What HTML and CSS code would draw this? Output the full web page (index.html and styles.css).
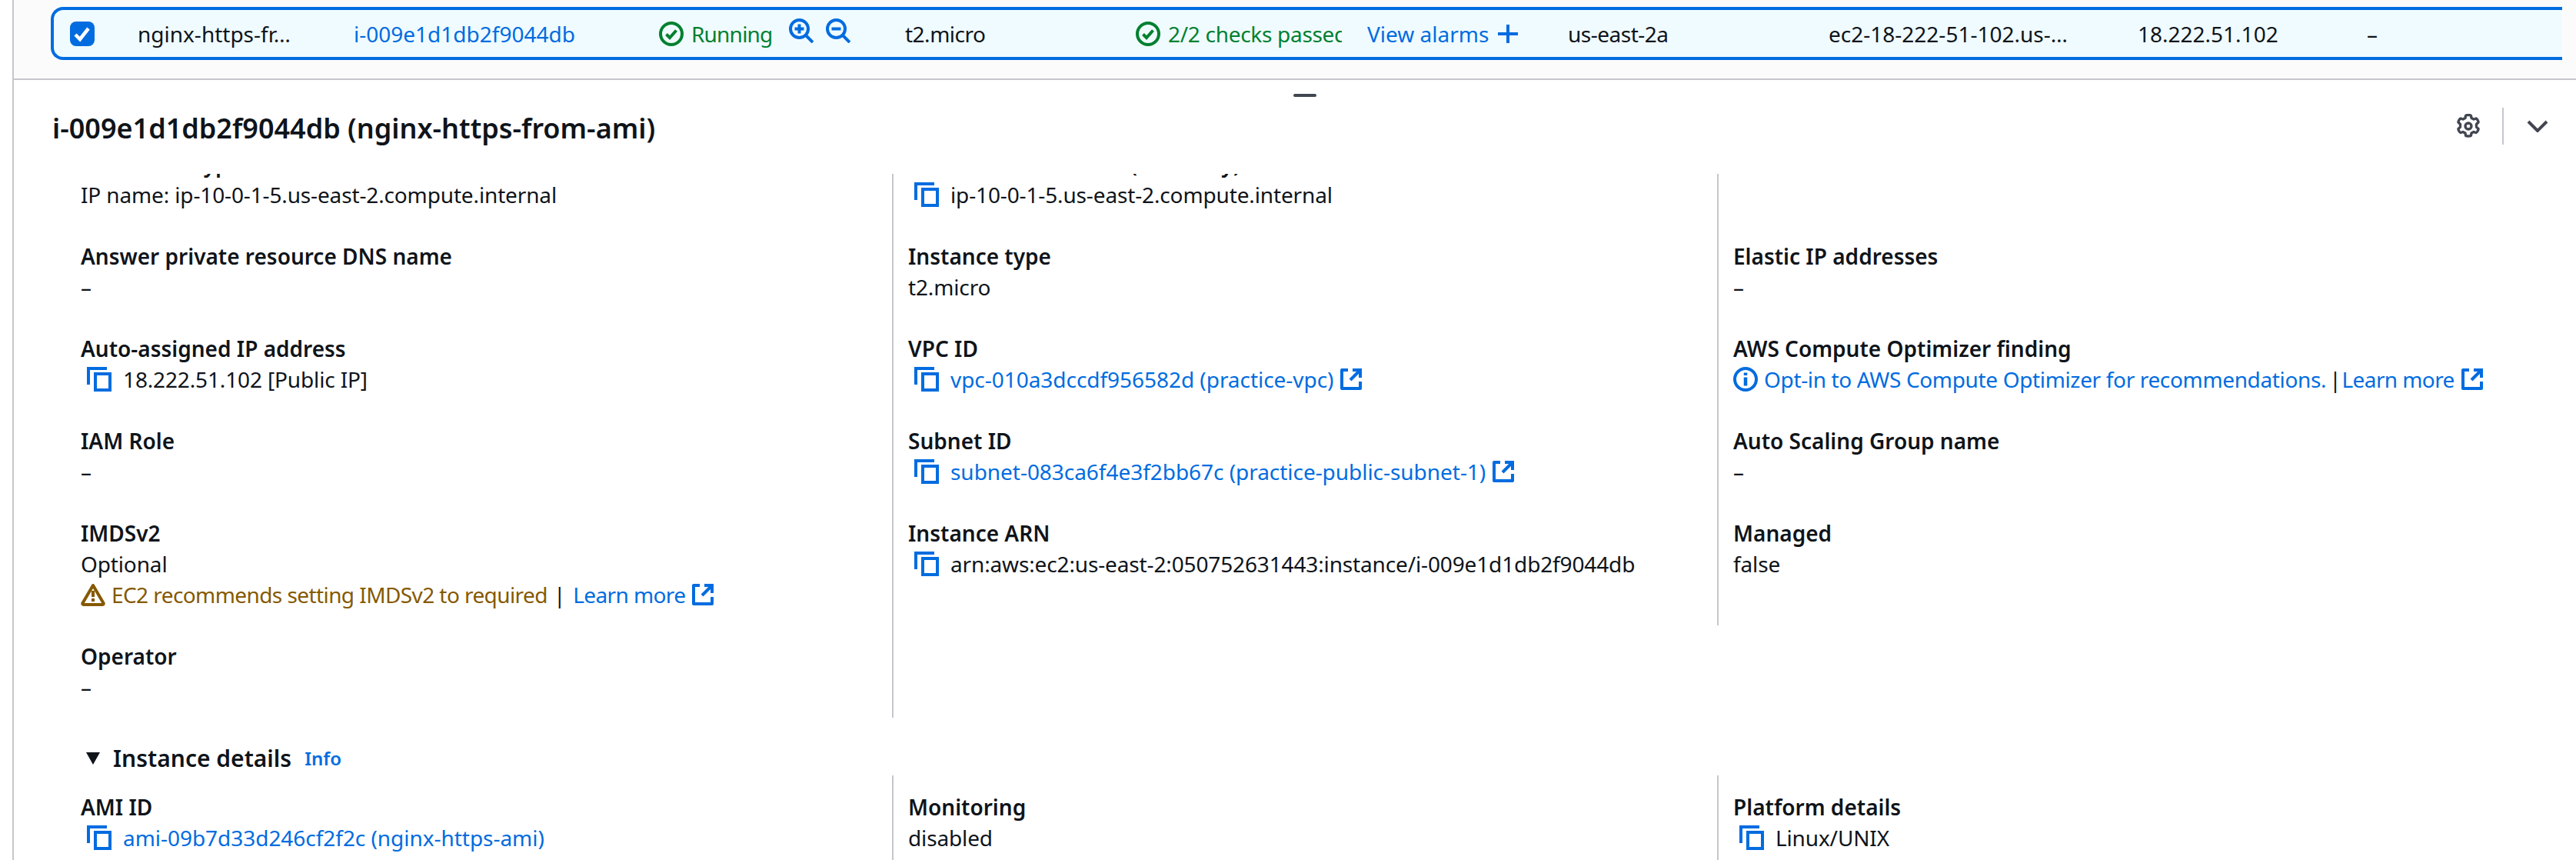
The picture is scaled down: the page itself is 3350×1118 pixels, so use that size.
FILE: index.html
```html
<!DOCTYPE html>
<html lang="en">
<head>
  <meta charset="UTF-8">
  <title>EC2 Instance details</title>
  <link rel="stylesheet" href="styles.css">
</head>
<body>
  <svg class="defs" aria-hidden="true">
    <symbol id="copy" viewBox="0 0 32 32">
      <path d="M2 23V2h24" fill="none" stroke="currentColor" stroke-width="4"/>
      <rect x="11" y="9" width="19" height="21" fill="none" stroke="currentColor" stroke-width="4"/>
    </symbol>
    <symbol id="ext" viewBox="0 0 28 28">
      <path d="M10 2H2v24h24v-9" fill="none" stroke="currentColor" stroke-width="4" stroke-linejoin="round"/>
      <path d="M16 2h10v10" fill="none" stroke="currentColor" stroke-width="4"/>
      <path d="M25 3 13 15" fill="none" stroke="currentColor" stroke-width="4"/>
    </symbol>
    <symbol id="ok" viewBox="0 0 32 32">
      <circle cx="16" cy="16" r="14" fill="none" stroke="currentColor" stroke-width="4"/>
      <path d="M9.500 16.500 14 21l8.500-9.500" fill="none" stroke="currentColor" stroke-width="4"/>
    </symbol>
  </svg>

  <div class="pane">
    <div class="table-area">
      <div class="selected-row">
        <div class="cell"><span class="checkbox"><svg viewBox="0 0 32 32" width="32" height="32"><path d="M7 17l6 6 11-14" fill="none" stroke="#fff" stroke-width="4.500"/></svg></span></div>
        <div class="cell">nginx-https-fr…</div>
        <div class="cell link">i-009e1d1db2f9044db</div>
        <div class="cell status green">
          <svg class="icon"><use href="#ok"/></svg><span class="running">Running</span>
          <svg class="zoom-icon link" viewBox="0 0 32 32"><circle cx="13.500" cy="13.500" r="11.500" fill="none" stroke="currentColor" stroke-width="4"/><path d="M22 22l9 9" stroke="currentColor" stroke-width="4"/><path d="M7.500 13.500h12M13.500 7.500v12" stroke="currentColor" stroke-width="4"/></svg>
          <svg class="zoom-icon link" viewBox="0 0 32 32"><circle cx="13.500" cy="13.500" r="11.500" fill="none" stroke="currentColor" stroke-width="4"/><path d="M22 22l9 9" stroke="currentColor" stroke-width="4"/><path d="M7.500 13.500h12" stroke="currentColor" stroke-width="4"/></svg>
        </div>
        <div class="cell tight">t2.micro</div>
        <div class="cell status green">
          <svg class="icon"><use href="#ok"/></svg><span class="clip">2/2 checks passed</span>
        </div>
        <div class="cell alarms link">View alarms <svg class="plus" viewBox="0 0 26 24"><path d="M13 0v24M0 12h26" stroke="currentColor" stroke-width="4"/></svg></div>
        <div class="cell tight">us-east-2a</div>
        <div class="cell">ec2-18-222-51-102.us-…</div>
        <div class="cell">18.222.51.102</div>
        <div class="cell">–</div>
      </div>
    </div>

    <div class="details">
      <div class="drag-handle"></div>
      <div class="details-head">
        <h2>i-009e1d1db2f9044db (nginx-https-from-ami)</h2>
        <div class="head-actions">
          <svg class="gear" viewBox="0 0 32 32"><path d="M12.500 2.500c0-1 3-1 3.500-1s3.500 0 3.500 1l.5 3 3 1.500 3-1c1-.3 3.500 4 3 5l-2.500 2.500v3.500l2.500 2.500c.5 1-2 5.300-3 5l-3-1-3 1.500-.5 3c0 1-3 1-3.500 1s-3.500 0-3.500-1l-.5-3-3-1.500-3 1c-1 .3-3.500-4-3-5l2.500-2.500v-3.500l-2.500-2.500c-.5-1 2-5.300 3-5l3 1 3-1.500z" fill="none" stroke="#424650" stroke-width="3.400" stroke-linejoin="round"/><circle cx="16" cy="16" r="4" fill="none" stroke="#424650" stroke-width="3.400"/></svg>
          <span class="head-divider"></span>
          <svg class="chevron" viewBox="0 0 28 16"><path d="M2 2l12 12L26 2" fill="none" stroke="#424650" stroke-width="4"/></svg>
        </div>
      </div>

      <div class="scroller">
        <div class="scroll-inner">
          <div class="columns">
            <div class="col">
              <div class="item"><div class="label">Hostname type</div><div class="value">IP name: ip-10-0-1-5.us-east-2.compute.internal</div></div>
              <div class="item"><div class="label">Answer private resource DNS name</div><div class="value">–</div></div>
              <div class="item"><div class="label">Auto-assigned IP address</div><div class="value copy"><svg class="copy-icon"><use href="#copy"/></svg>18.222.51.102 [Public IP]</div></div>
              <div class="item"><div class="label">IAM Role</div><div class="value">–</div></div>
              <div class="item">
                <div class="label">IMDSv2</div>
                <div class="value">Optional</div>
                <div class="value warn">
                  <svg class="warn-icon" viewBox="0 0 32 30"><path d="M16 3 2.500 26c-.5 1 0 2 1 2h25c1 0 1.500-1 1-2z" fill="none" stroke="#855900" stroke-width="4" stroke-linejoin="round"/><path d="M16 10v8M16 20v4" stroke="#855900" stroke-width="4"/></svg>
                  <span class="warn-text">EC2 recommends setting IMDSv2 to required</span><span class="sep">|</span><a class="link learn">Learn more</a><svg class="ext-icon link"><use href="#ext"/></svg>
                </div>
              </div>
              <div class="item"><div class="label">Operator</div><div class="value">–</div></div>
            </div>
            <div class="col ruled">
              <div class="item"><div class="label">Private IP DNS name (IPv4 only)</div><div class="value copy"><svg class="copy-icon"><use href="#copy"/></svg>ip-10-0-1-5.us-east-2.compute.internal</div></div>
              <div class="item"><div class="label">Instance type</div><div class="value tight">t2.micro</div></div>
              <div class="item"><div class="label">VPC ID</div><div class="value copy link"><svg class="copy-icon"><use href="#copy"/></svg>vpc-010a3dccdf956582d (practice-vpc)<svg class="ext-icon"><use href="#ext"/></svg></div></div>
              <div class="item"><div class="label">Subnet ID</div><div class="value copy link"><svg class="copy-icon"><use href="#copy"/></svg>subnet-083ca6f4e3f2bb67c (practice-public-subnet-1)<svg class="ext-icon"><use href="#ext"/></svg></div></div>
              <div class="item"><div class="label">Instance ARN</div><div class="value copy"><svg class="copy-icon link"><use href="#copy"/></svg>arn:aws:ec2:us-east-2:050752631443:instance/i-009e1d1db2f9044db</div></div>
            </div>
            <div class="col ruled short">
              <div class="item empty"></div>
              <div class="item"><div class="label">Elastic IP addresses</div><div class="value">–</div></div>
              <div class="item">
                <div class="label">AWS Compute Optimizer finding</div>
                <div class="value info">
                  <svg class="info-icon" viewBox="0 0 32 32"><circle cx="16" cy="16" r="14" fill="none" stroke="currentColor" stroke-width="4"/><path d="M16 13.500v11M16 7.500v3.500" stroke="currentColor" stroke-width="4.500"/></svg>
                  <a class="link opt-in">Opt-in to AWS Compute Optimizer for recommendations.</a><span class="sep">|</span><a class="link learn">Learn more</a><svg class="ext-icon"><use href="#ext"/></svg>
                </div>
              </div>
              <div class="item"><div class="label">Auto Scaling Group name</div><div class="value">–</div></div>
              <div class="item"><div class="label">Managed</div><div class="value">false</div></div>
            </div>
          </div>

          <div class="section-head">
            <svg class="caret" viewBox="0 0 20 16"><path d="M1 0h18L10 16z" fill="#0f141a"/></svg>
            <h3>Instance details</h3><a class="link info-link">Info</a>
          </div>

          <div class="columns lower">
            <div class="col">
              <div class="item"><div class="label">AMI ID</div><div class="value copy link"><svg class="copy-icon"><use href="#copy"/></svg>ami-09b7d33d246cf2f2c (nginx-https-ami)</div></div>
            </div>
            <div class="col ruled">
              <div class="item"><div class="label">Monitoring</div><div class="value">disabled</div></div>
            </div>
            <div class="col ruled">
              <div class="item"><div class="label">Platform details</div><div class="value copy"><svg class="copy-icon link"><use href="#copy"/></svg>Linux/UNIX</div></div>
            </div>
          </div>
        </div>
      </div>
    </div>
  </div>
</body>
</html>
```

FILE: styles.css
```css
html, body {
  margin: 0;
  height: 100%;
  overflow: hidden;
}

body {
  font-family: "Noto Sans", Arial, sans-serif;
  font-size: 28px;
  line-height: 40px;
  color: #0f141a;
  background-color: #fff;
}

.defs {
  width: 0;
  height: 0;
  display: block;
}

.link {
  color: #006ce0;
}

.green {
  color: #00802f;
}

.tight {
  letter-spacing: -0.5px;
}

.pane {
  margin-left: 16px;
  height: 1118px;
  border-left: 2px solid #c6c6cd;
  display: flex;
  flex-direction: column;
}

.table-area {
  height: 93px;
  padding: 9px 0 0 48px;
  background-color: #fbfbfb;
  border-bottom: 2px solid #c6c6cd;
}

.selected-row {
  width: 3262px;
  height: 61px;
  display: grid;
  grid-template-columns: 88px 281px 397px 320px 300px 301px 261px 339px 402px 298px 1fr;
  align-items: center;
  background-color: #f0fbff;
  border: 4px solid #006ce0;
  border-right: none;
  border-radius: 16px 0 0 16px;
}

.cell {
  padding-left: 21px;
  white-space: nowrap;
  display: flex;
  align-items: center;
}

.checkbox {
  width: 32px;
  height: 32px;
  background-color: #006ce0;
  border-radius: 8px;
  display: block;
}

.checkbox svg {
  display: block;
}

.icon {
  width: 32px;
  height: 32px;
  margin-right: 10px;
  flex: none;
}

.running {
  margin-right: 6px;
  letter-spacing: -0.8px;
}

.zoom-icon {
  width: 32px;
  height: 32px;
  margin-left: 16px;
  flex: none;
  position: relative;
  top: -4px;
}

.clip {
  width: 226px;
  overflow: hidden;
  letter-spacing: -0.3px;
}

.plus {
  width: 26px;
  height: 24px;
  margin-left: 12px;
}

.details {
  flex: 1;
  min-height: 0;
  display: flex;
  flex-direction: column;
}

.drag-handle {
  width: 30px;
  height: 4px;
  margin: 18px 0 0 1664px;
  background-color: #414750;
  border-radius: 2px;
}

.details-head {
  height: 100px;
  padding-left: 50px;
  display: flex;
  justify-content: space-between;
  align-items: flex-start;
}

.details-head h2 {
  margin: 0;
  padding-top: 17px;
  font-size: 36px;
  line-height: 48px;
  font-weight: 600;
}

.head-actions {
  height: 48px;
  margin-top: 14px;
  padding-right: 36px;
  display: flex;
  align-items: center;
}

.gear {
  width: 32px;
  height: 32px;
}

.head-divider {
  width: 2px;
  height: 48px;
  margin: 0 30px 0 28px;
  background-color: #c6c6cd;
}

.chevron {
  width: 28px;
  height: 16px;
}

.scroller {
  flex: 1;
  min-height: 0;
  overflow: hidden;
}

.scroll-inner {
  margin-top: -33px;
}

.columns {
  display: grid;
  grid-template-columns: 1142px 1073px 1fr;
  align-items: stretch;
}

.col {
  padding: 0 0 20px 87px;
}

.ruled {
  border-left: 2px solid #c6c6cd;
  padding-left: 19px;
}

.short {
  align-self: start;
  padding-bottom: 60px;
}

.item {
  margin-bottom: 40px;
}

.item:last-child {
  margin-bottom: 0;
}

.empty {
  height: 80px;
}

.label {
  font-weight: 600;
  white-space: nowrap;
}

.value {
  display: flex;
  align-items: center;
  white-space: nowrap;
  letter-spacing: -0.14px;
}

.value.link {
  letter-spacing: -0.04px;
}

.copy-icon {
  width: 32px;
  height: 32px;
  margin: 0 15px 0 8px;
  color: #006ce0;
  flex: none;
}

.ext-icon {
  width: 28px;
  height: 28px;
  margin-left: 9px;
  color: #006ce0;
  flex: none;
}

.warn-icon {
  width: 32px;
  height: 30px;
  margin-right: 8px;
  flex: none;
}

.warn-text {
  color: #855900;
  letter-spacing: -0.58px;
}

.opt-in {
  letter-spacing: -0.35px;
}

.learn {
  letter-spacing: -0.6px;
}

.sep {
  margin: 0 1px 0 4px;
}

.warn .sep {
  margin: 0 10px 0 8px;
}

.info-icon {
  width: 32px;
  height: 32px;
  margin-right: 8px;
  color: #006ce0;
  flex: none;
}

.section-head {
  height: 45px;
  padding: 30px 0 0 93px;
  display: flex;
  align-items: center;
}

.caret {
  width: 20px;
  height: 16px;
  margin-right: 16px;
}

.section-head h3 {
  margin: 0 17px 0 0;
  font-size: 30px;
  font-weight: 600;
}

.info-link {
  font-size: 24px;
  font-weight: 600;
}

.lower .col {
  padding-top: 21px;
}
```
